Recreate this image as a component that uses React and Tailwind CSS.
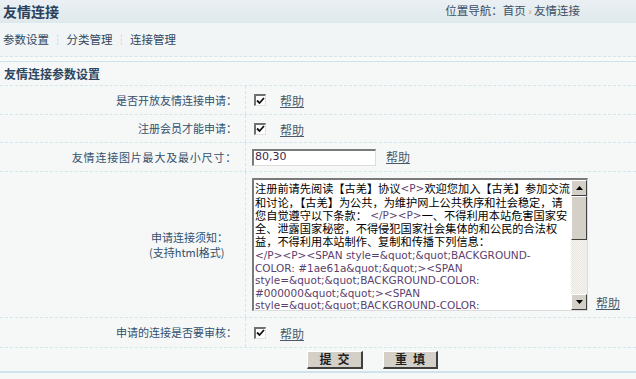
import React from "react";

const F = { fontFamily: '"Noto Sans CJK SC", "Noto Sans", sans-serif' };

function Check() {
  return (
    <span className="inline-flex w-[12px] h-[12px] bg-white border-t-[2px] border-l-[2px] border-t-[#707070] border-l-[#707070] border-b border-r border-b-[#e0e0e0] border-r-[#e0e0e0] items-center justify-center">
      <svg width="9" height="8" viewBox="0 0 9 8">
        <path d="M1 3.5 L3.5 6 L8 1" stroke="#111" strokeWidth="1.8" fill="none" />
      </svg>
    </span>
  );
}

function Help({ className = "" }) {
  return <span className={"underline text-[#4d5966] text-[12px] " + className}>帮助</span>;
}

function Row({ label, h, children, labelClass = "pr-[8px]" }) {
  return (
    <div className={"grid grid-cols-[246px_1fr] border-b border-dashed border-[#d3e6ec] " + h}>
      <div className={"flex items-center justify-end border-r border-dashed border-[#d3e6ec] text-[#33506e] text-[11px] leading-[15px] " + labelClass}>
        {label}
      </div>
      <div className="flex items-center pl-[8px]">{children}</div>
    </div>
  );
}

const A = ({ children }) => (
  <span className="text-[#5b3f6e] text-[10.5px]" style={{ fontFamily: '"DejaVu Sans", sans-serif' }}>
    {children}
  </span>
);

const L = ({ h, children }) => <div className={"whitespace-nowrap flex items-center " + h}>{children}</div>;

export default function App() {
  return (
    <div className="w-[636px] h-[379px] bg-[#f6f8f8] overflow-hidden" style={F}>
      <div className="h-[23px] flex items-center justify-between pl-[3px] pr-[56px] bg-gradient-to-b from-[#eaf0f3] to-[#e1e9ed] border-b border-[#d8ebf0]">
        <span className="font-bold text-[14px] text-[#2b405a] leading-none">友情连接</span>
        <span className="text-[11.5px] text-[#3b4f66] leading-none">
          位置导航：首页 <span className="text-[#e08a3c] text-[10px]">›</span> 友情连接
        </span>
      </div>
      <div className="h-[34px] flex items-center pl-[3px] bg-[#f1f5f6] border-b border-dashed border-[#d3e6ec] text-[11.5px] text-[#33475e]">
        参数设置 <span className="text-[#b0bcc4] mx-[3px]">┆</span>分类管理 <span className="text-[#b0bcc4] mx-[3px]">┆</span>连接管理
      </div>
      <div className="h-[5px] bg-[#f8fafa] border-b border-[#cfe4ea]"></div>
      <div className="h-[24px] flex items-center pl-[4px] border-b border-dashed border-[#d3e6ec] font-bold text-[12px] text-[#2c4560]">
        友情连接参数设置
      </div>
      <Row label="是否开放友情连接申请：" h="h-[29px]">
        <Check />
        <Help className="ml-[14px] mt-[2px]" />
      </Row>
      <Row label="注册会员才能申请：" h="h-[28px]">
        <Check />
        <Help className="ml-[14px] mt-[2px]" />
      </Row>
      <Row label={<span className="tracking-[0.8px]">友情连接图片最大及最小尺寸：</span>} h="h-[29px]">
        <div
          className="ml-[-2px] w-[124px] h-[17px] bg-white border-t-[2px] border-l-[2px] border-t-[#7a7a7a] border-l-[#7a7a7a] border-b border-r border-b-[#dcdcdc] border-r-[#dcdcdc] flex items-center pl-[1px] text-[11px] text-[#3a2a4e]"
          style={{ fontFamily: '"DejaVu Sans", sans-serif' }}
        >
          80,30
        </div>
        <Help className="ml-[10px]" />
      </Row>
      <Row
        label={
          <div className="flex flex-col items-start">
            <span>申请连接须知：</span>
            <span className="ml-[-2px]">(支持html格式)</span>
          </div>
        }
        labelClass="pr-[17px]"
        h="h-[146px]"
      >
        <div className="flex items-end">
          <div className="ml-[-2px] w-[336px] h-[133px] bg-white border-t-[2px] border-l-[2px] border-t-[#7a7a7a] border-l-[#7a7a7a] border-b border-r border-b-[#dcdcdc] border-r-[#dcdcdc] flex overflow-hidden">
            <div className="flex-1 pl-[1px] pt-[1px] text-[11.2px] leading-[13px] text-black overflow-hidden">
              <L h="h-[15px]">注册前请先阅读【古羌】协议<A>&lt;P&gt;</A>欢迎您加入【古羌】参加交流</L>
              <L h="h-[13px]">和讨论，【古羌】为公共，为维护网上公共秩序和社会稳定，请</L>
              <L h="h-[13px]">您自觉遵守以下条款： <A>&nbsp;&lt;/P&gt;&lt;P&gt;</A>一、不得利用本站危害国家安</L>
              <L h="h-[13px]">全、泄露国家秘密，不得侵犯国家社会集体的和公民的合法权</L>
              <L h="h-[13px]">益，不得利用本站制作、复制和传播下列信息：</L>
              <L h="h-[14px]"><A>&lt;/P&gt;&lt;P&gt;&lt;SPAN style=&amp;quot;&amp;quot;BACKGROUND-</A></L>
              <L h="h-[12.5px]"><A>COLOR: #1ae61a&amp;quot;&amp;quot;&gt;&lt;SPAN</A></L>
              <L h="h-[12.5px]"><A>style=&amp;quot;&amp;quot;BACKGROUND-COLOR:</A></L>
              <L h="h-[12.5px]"><A>#000000&amp;quot;&amp;quot;&gt;&lt;SPAN</A></L>
              <L h="h-[12.5px]"><A>style=&amp;quot;&amp;quot;BACKGROUND-COLOR:</A></L>
            </div>
            <div className="w-[16px] flex flex-col bg-[repeating-conic-gradient(#e8e6e0_0%_25%,#f6f5f2_0%_50%)] bg-[length:2px_2px]">
              <div className="h-[16px] bg-[#d4d0c8] border-t border-l border-t-white border-l-white border-b border-r border-b-[#404040] border-r-[#404040] flex items-center justify-center">
                <svg width="7" height="4" viewBox="0 0 7 4"><path d="M3.5 0 L7 4 L0 4 Z" fill="#000" /></svg>
              </div>
              <div className="h-[44px] bg-[#d4d0c8] border-t border-l border-t-white border-l-white border-b border-r border-b-[#404040] border-r-[#404040]"></div>
              <div className="flex-1"></div>
              <div className="h-[16px] bg-[#d4d0c8] border-t border-l border-t-white border-l-white border-b border-r border-b-[#404040] border-r-[#404040] flex items-center justify-center">
                <svg width="7" height="4" viewBox="0 0 7 4"><path d="M0 0 L7 0 L3.5 4 Z" fill="#000" /></svg>
              </div>
            </div>
          </div>
          <Help className="ml-[8px] mb-[-1px]" />
        </div>
      </Row>
      <Row label="申请的连接是否要审核：" h="h-[30px]">
        <Check />
        <Help className="ml-[14px] mt-[2px]" />
      </Row>
      <div className="h-[25px] flex items-center gap-[20px] pl-[307px] border-b-[2px] border-[#cfe4ea]">
        <button className="w-[56px] h-[18px] bg-[#d4d0c8] border-t border-l border-t-white border-l-white border-b-[2px] border-r-[2px] border-b-[#404040] border-r-[#404040] text-[12px] font-bold text-[#222] leading-none tracking-[6px] pl-[6px]">提交</button>
        <button className="w-[55px] h-[18px] bg-[#d4d0c8] border-t border-l border-t-white border-l-white border-b-[2px] border-r-[2px] border-b-[#404040] border-r-[#404040] text-[12px] font-bold text-[#222] leading-none tracking-[6px] pl-[6px]">重填</button>
      </div>
    </div>
  );
}
